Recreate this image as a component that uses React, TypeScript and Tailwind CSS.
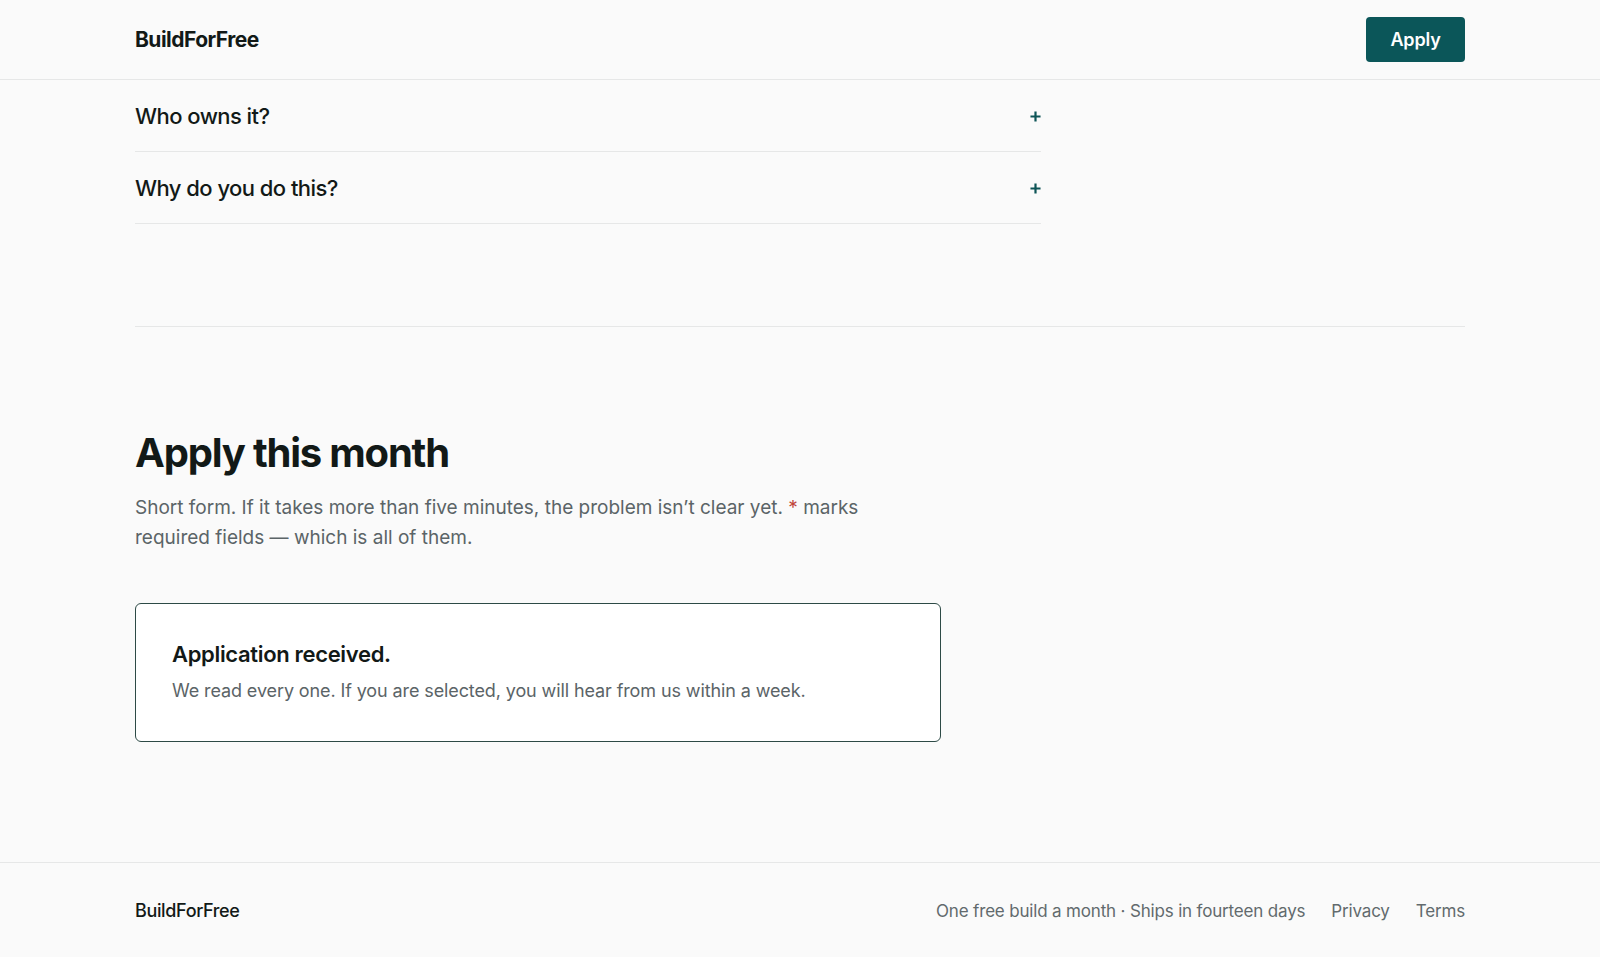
import React from 'react'

const faqs = ['Who owns it?', 'Why do you do this?']

const PlusIcon = () => (
  <svg className="w-[11px] h-[11px]" viewBox="0 0 12 12" fill="none">
    <path d="M6 0.5v11M0.5 6h11" stroke="#0d5456" strokeWidth="2.4" />
  </svg>
)

export default function App() {
  return (
    <div
      className="min-h-screen bg-[#fafafa] text-[#121917]"
      style={{ fontFamily: 'Inter, "Noto Sans", sans-serif' }}
    >
      {/* Header */}
      <header className="h-20 border-b border-[#e6e7e7] bg-[#fafafa]">
        <div className="mx-auto flex h-full max-w-[1330px] items-center justify-between">
          <span className="text-[21px] font-bold tracking-[-0.025em] text-[#121917]">BuildForFree</span>
          <button className="h-[45px] w-[99px] rounded-[4px] bg-[#0b5659] text-[18px] font-semibold tracking-[-0.01em] text-white">
            Apply
          </button>
        </div>
      </header>

      <main>
        {/* FAQ */}
        <section className="mx-auto max-w-[1330px] pb-[102px]">
          <div className="w-[906px]">
            {faqs.map((q) => (
              <div
                key={q}
                className="flex h-[72px] items-center justify-between border-b border-[#e6e7e7] pt-[2px]"
              >
                <span className="text-[22px] font-medium tracking-[-0.025em]">{q}</span>
                <PlusIcon />
              </div>
            ))}
          </div>
        </section>

        {/* Apply */}
        <section className="mx-auto max-w-[1330px] border-t border-[#e6e7e7] pt-[104px] pb-[120px]">
          <h2 className="text-[40px] font-bold leading-[44px] tracking-[-0.03em] text-[#121917]">
            Apply this month
          </h2>
          <p className="mt-[18px] max-w-[760px] text-[19px] leading-[30px] text-[#5b6467]">
            Short form. If it takes more than five minutes, the problem isn’t clear yet.{' '}
            <span className="text-[#c0453b]">*</span> marks required fields — which is all of them.
          </p>

          <div className="mt-[50px] w-[806px] rounded-[6px] border border-[#2d4a46] bg-white px-9 py-9">
            <h3 className="text-[22px] font-semibold leading-[29px] tracking-[-0.015em] text-[#121917]">
              Application received.
            </h3>
            <p className="mt-[8px] text-[18px] leading-[28px] tracking-[-0.006em] text-[#5b6467]">
              We read every one. If you are selected, you will hear from us within a week.
            </p>
          </div>
        </section>
      </main>

      {/* Footer */}
      <footer className="border-t border-[#e6e7e7]">
        <div className="mx-auto flex h-[94px] max-w-[1330px] items-center justify-between">
          <span className="text-[18px] font-medium tracking-[-0.02em] text-[#121917]">BuildForFree</span>
          <div className="flex items-center gap-[26px] pt-[3px] text-[17px] text-[#626a6d] tracking-[-0.01em]">
            <span>One free build a month · Ships in fourteen days</span>
            <a>Privacy</a>
            <a>Terms</a>
          </div>
        </div>
      </footer>
    </div>
  )
}
